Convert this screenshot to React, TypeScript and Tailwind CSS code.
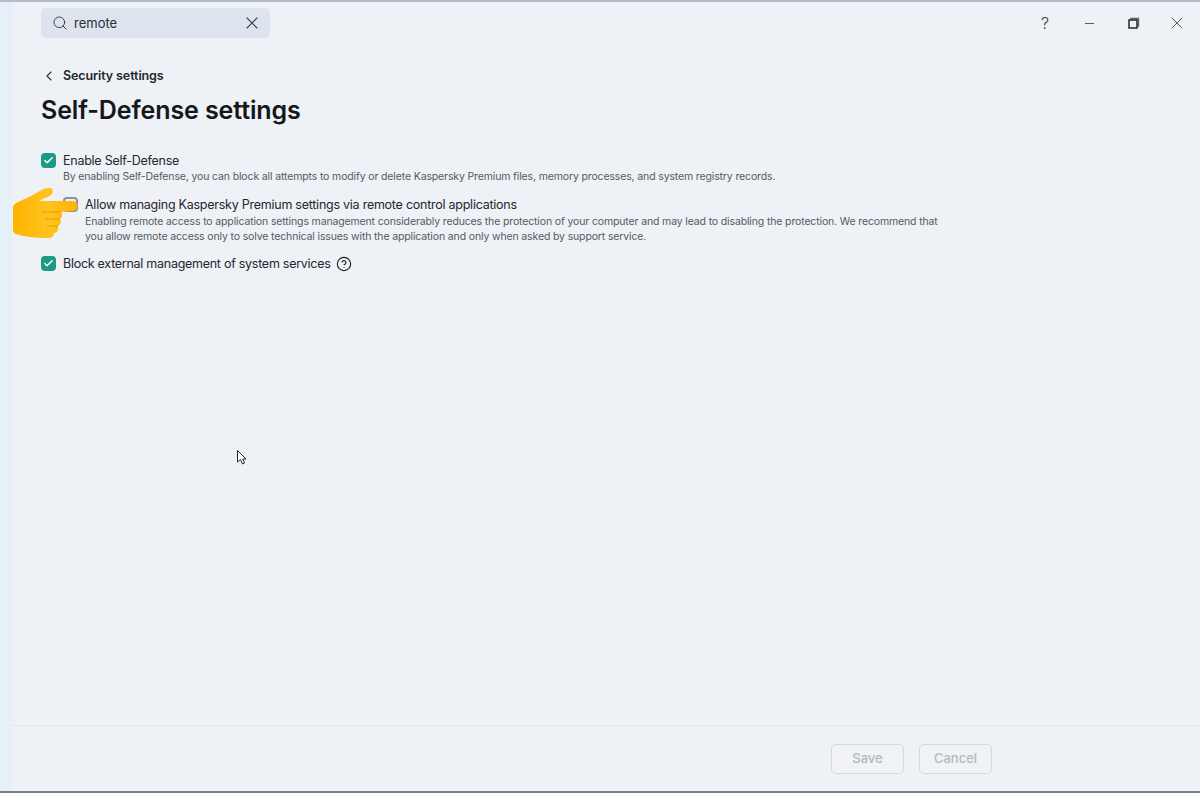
import { X, ChevronLeft, Search, Check, CircleHelp } from "lucide-react";

const font = { fontFamily: '"Inter", "Noto Sans", sans-serif' };

function Checkbox({ checked }: { checked: boolean }) {
  if (!checked) {
    return <div className="h-[15px] w-[15px] shrink-0 rounded-[4px] border-2 border-[#8b9099]" />;
  }
  return (
    <div className="flex h-[15px] w-[15px] shrink-0 items-center justify-center rounded-[4px] bg-[#1d9a84]">
      <Check size={11} strokeWidth={3} className="text-white" />
    </div>
  );
}

function PointingHand() {
  return (
    <svg width="67" height="53" viewBox="0 0 67 53" className="absolute left-[12px] top-[185px]">
      <defs>
        <linearGradient id="hand" x1="0" x2="1" y1="0" y2="0">
          <stop offset="0" stopColor="#ffb300" />
          <stop offset="0.55" stopColor="#ffc31f" />
          <stop offset="1" stopColor="#ffb300" />
        </linearGradient>
      </defs>
      <path
        d="M1 20 C1 18 3 17 6 15 C12 12 20 9 26 5 C32 1 38 0 40 2 C42 5 40 8 36 10 C32 11 29 13 27 14 L61 14 C67 14 67 24 61 24 L49 25 C51 28 50 31 48 32 C50 35 48 38 46 39 C47 43 45 46 42 46 C42 49 40 51 36 51 C26 51 12 50 4 47 C2 46 1 45 1 43 Z"
        fill="url(#hand)"
      />
      <path d="M30 25 L49 25 M33 32 L48 32 M35 39 L46 39" stroke="#e89b00" strokeWidth="1" fill="none" />
    </svg>
  );
}

function MouseCursor() {
  return (
    <svg width="12" height="17" viewBox="0 0 12 17" className="absolute left-[236px] top-[447px]">
      <path d="M1.5 1.5 V13 L4.5 10.5 L6.5 15 L8.5 14 L6.8 10 H10 Z" fill="#fff" stroke="#1f2937" strokeWidth="1" strokeLinejoin="round" />
    </svg>
  );
}

export default function App() {
  return (
    <div
      style={font}
      className="relative flex h-[793px] w-[1200px] overflow-hidden border-t-2 border-b-2 border-t-[#b4bccb] border-b-[#7c8087] bg-[#eef1f6] text-[#24272d]"
    >
      <div className="w-[12px] shrink-0 bg-[#e6f0f9]" />

      <div className="flex min-w-0 flex-1 flex-col">
        <div className="flex items-start justify-between pl-[29px] pt-[6px]">
          <div className="flex h-[30px] w-[229px] items-center rounded-[5px] bg-[#dde4ed] pl-[11px] pr-[8px]">
            <Search size={16} strokeWidth={1.5} className="text-[#3d434c]" />
            <span className="ml-[6px] flex-1 pt-[1px] text-[13px] text-[#2a2e35]">remote</span>
            <X size={20} strokeWidth={1.3} className="text-[#3d434c]" />
          </div>
          <div className="flex items-center pt-[5px] pr-[13px] text-[#3a3d44]">
            <span className="w-[16px] text-center text-[16px] font-light leading-[20px]">?</span>
            <div className="ml-[32px] h-px w-[9px] bg-[#5a5e66]" />
            <svg width="12" height="12" viewBox="0 0 12 12" className="ml-[34px]">
              <path d="M3 2.5 V1.5 H10.5 V9 H9.5" fill="none" stroke="#5c6069" strokeWidth="1.4" />
              <rect x="1" y="3" width="8" height="8" fill="none" stroke="#16181c" strokeWidth="1.4" />
            </svg>
            <X size={20} strokeWidth={1} className="ml-[27px]" />
          </div>
        </div>

        <div className="flex-1 pl-[29px]">
          <div className="mt-[30px] flex items-center">
            <ChevronLeft size={16} strokeWidth={1.6} className="text-[#2a2e35]" />
            <span className="ml-[6px] text-[12.5px] font-semibold leading-[16px] tracking-[-0.1px]">Security settings</span>
          </div>
          <h1 className="mt-[10px] text-[25px] font-semibold leading-[32px] tracking-[-0.1px] text-[#15171b]">Self-Defense settings</h1>

          <div className="mt-[26px] flex gap-[7px]">
            <div className="pt-[1px]"><Checkbox checked /></div>
            <div>
              <div className="text-[12.5px] leading-[17px] tracking-[-0.25px]">Enable Self-Defense</div>
              <div className="text-[10.5px] leading-[15px] tracking-[-0.14px] text-[#555a63]">
                By enabling Self-Defense, you can block all attempts to modify or delete Kaspersky Premium files, memory processes, and system registry records.
              </div>
            </div>
          </div>

          <div className="mt-[12px] ml-[22px] flex gap-[7px]">
            <div className="pt-[1px]"><Checkbox checked={false} /></div>
            <div className="w-[870px]">
              <div className="text-[12.5px] leading-[18px] tracking-[-0.25px]">Allow managing Kaspersky Premium settings via remote control applications</div>
              <div className="text-[10.5px] leading-[15px] tracking-[-0.14px] text-[#555a63]">
                Enabling remote access to application settings management considerably reduces the protection of your computer and may lead to disabling the protection. We recommend that you allow remote access only to solve technical issues with the application and only when asked by support service.
              </div>
            </div>
          </div>

          <div className="mt-[11px] flex items-center">
            <Checkbox checked />
            <span className="ml-[7px] text-[12.5px] leading-[17px] tracking-[-0.27px]">Block external management of system services</span>
            <CircleHelp size={16} strokeWidth={1.7} className="ml-[5px] text-[#1d1f24]" />
          </div>
        </div>

        <div className="flex h-[66px] shrink-0 items-start gap-[15px] border-t border-[#e2e6ed] pl-[819px] pt-[18px]">
          <button className="h-[30px] w-[73px] rounded-[5px] border border-[#d5d9e0] bg-[#f0f2f6] text-[13px] font-medium text-[#b4b8c0]">Save</button>
          <button className="h-[30px] w-[73px] rounded-[5px] border border-[#d5d9e0] bg-[#f0f2f6] text-[13px] font-medium text-[#b4b8c0]">Cancel</button>
        </div>
      </div>

      <PointingHand />
      <MouseCursor />
    </div>
  );
}
